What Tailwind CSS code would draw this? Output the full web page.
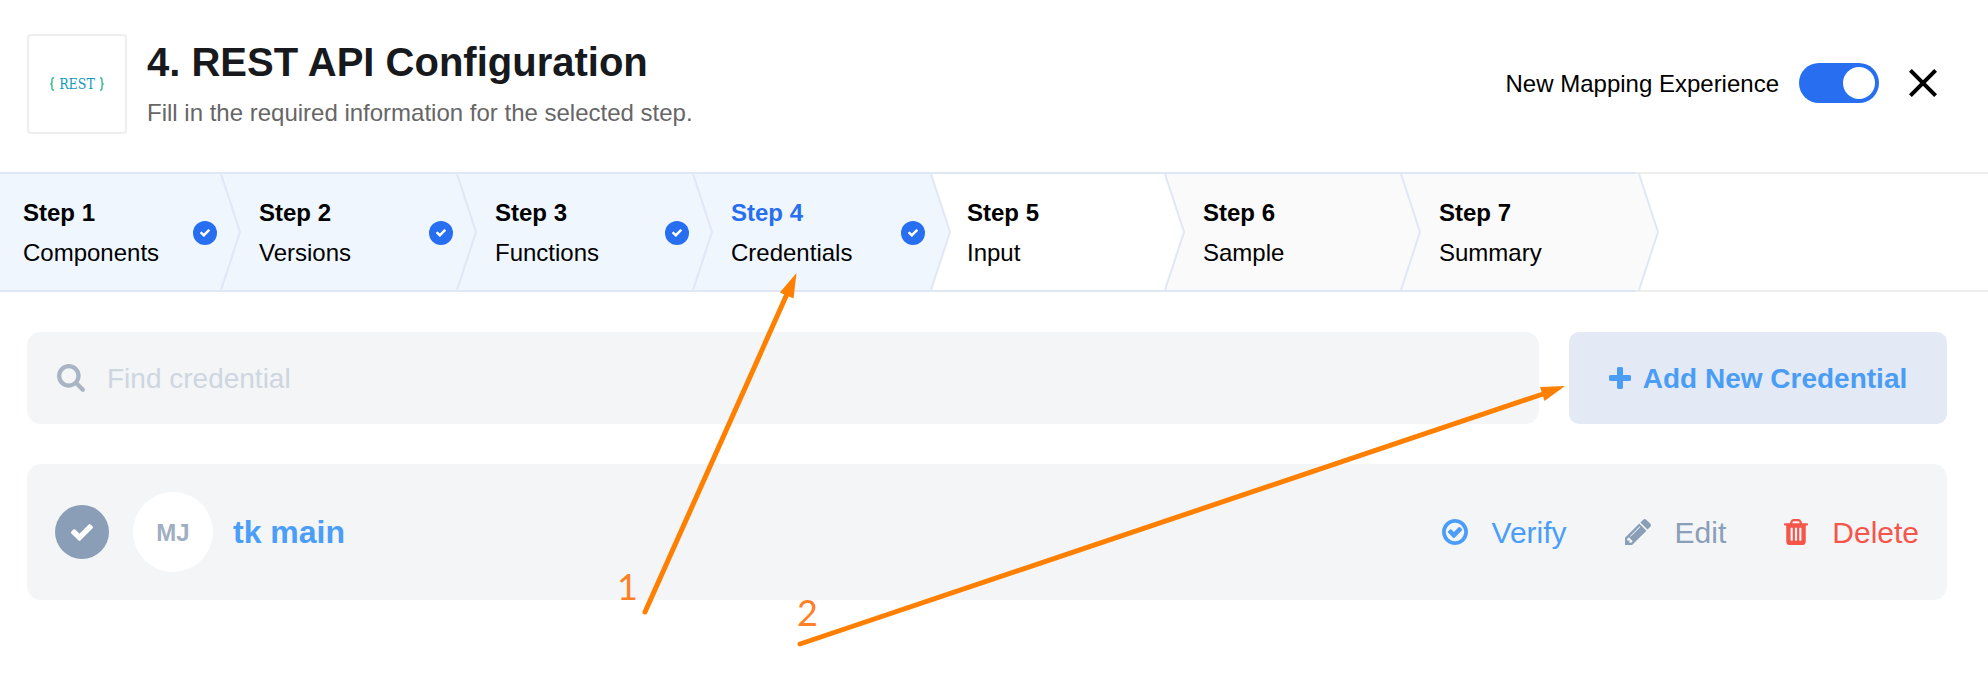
<!DOCTYPE html>
<html lang="en">
<head>
<meta charset="utf-8">
<meta name="viewport" content="width=device-width, initial-scale=1">
<title>REST API Configuration</title>
<script src="https://cdn.jsdelivr.net/npm/@tailwindcss/browser@4"></script>
</head>
<body class="relative min-h-screen overflow-x-hidden bg-white font-['Liberation_Sans',Arial,sans-serif] text-2xl text-black">

<svg class="hidden" aria-hidden="true">
  <symbol id="check" viewBox="121 334 1550 1188"><path d="M1671 566q0 40-28 68l-724 724-136 136q-28 28-68 28t-68-28l-136-136-362-362q-28-28-28-68t28-68l136-136q28-28 68-28t68 28l294 295 656-657q28-28 68-28t68 28l136 136q28 28 28 68z"/></symbol>
  <symbol id="chevron" viewBox="0 0 260 116" overflow="visible">
    <path d="M0 0H237L256 58L237 116H0Z"/>
    <path d="M237 0L256 58L237 116" fill="none" stroke="#e0e7f7" stroke-width="2"/>
  </symbol>
</svg>

<header class="flex h-[172px] items-start pt-[34px] pr-[51px] pl-[27px]">
  <div class="flex size-[100px] shrink-0 items-center justify-center gap-[5px] rounded border-2 border-[#eeeeee] font-['DejaVu_Serif_Condensed','DejaVu_Serif',serif] text-sm text-[#1199be]">
    <svg class="h-[14px] w-1" viewBox="0 0 4 14" fill="none" stroke="#3cc08e" stroke-width="1.500"><path d="M4 .7Q2 .7 2 2.500V5Q2 7 .3 7Q2 7 2 9V11.500Q2 13.300 4 13.300"/></svg>
    <span>REST</span>
    <svg class="h-[14px] w-1" viewBox="0 0 4 14" fill="none" stroke="#3cc08e" stroke-width="1.500"><path d="M0 .7Q2 .7 2 2.500V5Q2 7 3.700 7Q2 7 2 9V11.500Q2 13.300 0 13.300"/></svg>
  </div>
  <div class="ml-5 flex-1">
    <h1 class="mt-1 text-[40px] leading-[48px] font-bold text-[#17191c]">4. REST API Configuration</h1>
    <p class="mt-[11px] leading-8 text-[#666666]">Fill in the required information for the selected step.</p>
  </div>
  <div class="mt-7 flex items-center">
    <label for="mapping" class="pt-[2px] leading-10">New Mapping Experience</label>
    <input id="mapping" type="checkbox" role="switch" checked class="ml-5 h-10 w-20 appearance-none rounded-full bg-[#d0d5dd] p-1 before:block before:size-8 before:rounded-full before:bg-white checked:bg-[#286ef1] checked:before:ml-10">
    <button type="button" aria-label="Close" class="ml-[30px]">
      <svg class="size-7" viewBox="0 0 28 28" stroke="#000" stroke-width="4"><path d="M1.400 1.400L26.600 26.600M26.600 1.400L1.400 26.600"/></svg>
    </button>
  </div>
</header>

<nav class="flex" aria-label="Steps">
  <ol class="relative z-10 flex h-[120px] w-[1636px] shrink-0 border-y-2 border-[#dfe6f6]">
    <li class="relative z-[7] w-[236px] shrink-0">
      <svg class="absolute top-0 -left-4 h-[116px] w-[260px] fill-[#eff6fe]"><use href="#chevron"/></svg>
      <a href="#step1" class="relative flex h-full items-center pt-[2px] pr-[19px] pl-[23px]">
        <span class="flex-1 leading-10"><b class="block">Step 1</b>Components</span>
        <span class="flex size-6 items-center justify-center rounded-full bg-[#286ef1]"><svg class="h-2 w-[10px] fill-white"><use href="#check"/></svg></span>
      </a>
    </li>
    <li class="relative z-[6] w-[236px] shrink-0">
      <svg class="absolute top-0 -left-4 h-[116px] w-[260px] fill-[#eff6fe]"><use href="#chevron"/></svg>
      <a href="#step2" class="relative flex h-full items-center pt-[2px] pr-[19px] pl-[23px]">
        <span class="flex-1 leading-10"><b class="block">Step 2</b>Versions</span>
        <span class="flex size-6 items-center justify-center rounded-full bg-[#286ef1]"><svg class="h-2 w-[10px] fill-white"><use href="#check"/></svg></span>
      </a>
    </li>
    <li class="relative z-[5] w-[236px] shrink-0">
      <svg class="absolute top-0 -left-4 h-[116px] w-[260px] fill-[#eff6fe]"><use href="#chevron"/></svg>
      <a href="#step3" class="relative flex h-full items-center pt-[2px] pr-[19px] pl-[23px]">
        <span class="flex-1 leading-10"><b class="block">Step 3</b>Functions</span>
        <span class="flex size-6 items-center justify-center rounded-full bg-[#286ef1]"><svg class="h-2 w-[10px] fill-white"><use href="#check"/></svg></span>
      </a>
    </li>
    <li class="relative z-[4] w-[236px] shrink-0">
      <svg class="absolute top-0 -left-[14px] h-[116px] w-[260px] fill-[#eff6fe]"><use href="#chevron"/></svg>
      <a href="#step4" aria-current="step" class="relative flex h-full items-center pt-[2px] pr-[19px] pl-[23px]">
        <span class="flex-1 leading-10"><b class="block text-[#286ef1]">Step 4</b>Credentials</span>
        <span class="flex size-6 items-center justify-center rounded-full bg-[#286ef1]"><svg class="h-2 w-[10px] fill-white"><use href="#check"/></svg></span>
      </a>
    </li>
    <li class="relative z-[3] w-[236px] shrink-0">
      <svg class="absolute top-0 -left-4 h-[116px] w-[260px] fill-white"><use href="#chevron"/></svg>
      <a href="#step5" class="relative flex h-full items-center pt-[2px] pr-[19px] pl-[23px]">
        <span class="flex-1 leading-10"><b class="block">Step 5</b>Input</span>
      </a>
    </li>
    <li class="relative z-[2] w-[236px] shrink-0">
      <svg class="absolute top-0 -left-4 h-[116px] w-[260px] fill-[#fafafa]"><use href="#chevron"/></svg>
      <a href="#step6" class="relative flex h-full items-center pt-[2px] pr-[19px] pl-[23px]">
        <span class="flex-1 leading-10"><b class="block">Step 6</b>Sample</span>
      </a>
    </li>
    <li class="relative z-[1] w-[236px] shrink-0">
      <svg class="absolute top-0 -left-[14px] h-[116px] w-[260px] fill-[#fafafa]"><use href="#chevron"/></svg>
      <a href="#step7" class="relative flex h-full items-center pt-[2px] pr-[19px] pl-[23px]">
        <span class="flex-1 leading-10"><b class="block">Step 7</b>Summary</span>
      </a>
    </li>
  </ol>
  <div class="flex-1 border-y-2 border-[#eeeeee]"></div>
</nav>

<main class="pt-10 pr-[41px] pl-[27px]">
  <div class="flex gap-[30px] text-[28px]">
    <label class="flex h-[92px] flex-1 items-center gap-[22px] rounded-[14px] bg-[#f3f5f7] px-[30px]">
      <svg class="size-7 shrink-0 fill-[#a9b4c4]" viewBox="64 128 1664 1664" role="img" aria-label="Find credential"><path d="M1216 832q0-185-131.500-316.500t-316.500-131.500-316.500 131.500-131.500 316.500 131.500 316.500 316.500 131.500 316.500-131.500 131.500-316.500zm512 832q0 52-38 90t-90 38q-54 0-90-38l-343-342q-179 124-399 124-143 0-273.500-55.500t-225-150-150-225-55.500-273.500 55.500-273.500 150-225 225-150 273.500-55.500 273.500 55.500 225 150 150 225 55.500 273.500q0 220-124 399l343 343q37 37 37 90z"/></svg>
      <input type="search" placeholder="Find credential" class="min-w-0 flex-1 bg-transparent pt-[2px] leading-10 outline-none placeholder:text-[#ced6e0]">
    </label>
    <button type="button" class="flex h-[92px] w-[378px] items-center justify-center gap-3 rounded-[10px] bg-[#e3eaf6] font-bold text-[#4a9df5]">
      <svg class="size-[22px] fill-current" viewBox="192 128 1408 1408"><path d="M1600 736v192q0 40-28 68t-68 28h-416v416q0 40-28 68t-68 28h-192q-40 0-68-28t-28-68v-416h-416q-40 0-68-28t-28-68v-192q0-40 28-68t68-28h416v-416q0-40 28-68t68-28h192q40 0 68 28t28 68v416h416q40 0 68 28t28 68z"/></svg>
      <span class="pt-[2px]">Add New Credential</span>
    </button>
  </div>

  <section class="mt-10 flex h-[136px] items-center rounded-[14px] bg-[#f3f5f7] px-7">
    <button type="button" aria-label="Select tk main" aria-pressed="true" class="flex size-[54px] items-center justify-center rounded-full bg-[#8b9eb7]"><svg class="h-[17px] w-[22px] fill-white"><use href="#check"/></svg></button>
    <span class="ml-6 flex size-20 items-center justify-center rounded-full bg-white pt-[2px] font-bold text-[#a0aec3]">MJ</span>
    <h2 class="ml-5 flex-1 text-[32px] font-bold text-[#4a9df8]">tk main</h2>
    <div class="flex items-center gap-[58px] text-[30px] leading-10">
      <button type="button" class="flex items-center gap-6 text-[#4a9df8]">
        <svg class="size-[26px] fill-current" viewBox="128 128 1536 1536"><path d="M1299 813l-422 422q-19 19-45 19t-45-19l-294-294q-19-19-19-45t19-45l102-102q19-19 45-19t45 19l147 147 275-275q19-19 45-19t45 19l102 102q19 19 19 45t-19 45zm141 83q0-148-73-273t-198-198-273-73-273 73-198 198-73 273 73 273 198 198 273 73 273-73 198-198 73-273zm224 0q0 209-103 385.500t-279.500 279.500-385.500 103-385.500-103-279.500-279.500-103-385.500 103-385.500 279.500-279.500 385.500-103 385.500 103 279.500 279.500 103 385.500z"/></svg>
        <span class="pt-[2px]">Verify</span>
      </button>
      <button type="button" class="flex items-center gap-6 text-[#8b9eb7]">
        <svg class="size-[26px] fill-current" viewBox="128 149 1515 1515"><path d="M491 1536l91-91-235-235-91 91v107h128v128h107zm523-928q0-22-22-22-10 0-17 7l-542 542q-7 7-7 17 0 22 22 22 10 0 17-7l542-542q7-7 7-17zm-54-192l416 416-832 832h-416v-416zm683 96q0 53-37 90l-166 166-416-416 166-165q36-38 90-38 53 0 91 38l235 234q37 39 37 91z"/></svg>
        <span class="pt-[2px]">Edit</span>
      </button>
      <button type="button" class="flex items-center gap-6 text-[#f6554b]">
        <svg class="h-[26px] w-6 fill-current" viewBox="192 128 1408 1536"><path d="M704 1376v-704q0-14-9-23t-23-9h-64q-14 0-23 9t-9 23v704q0 14 9 23t23 9h64q14 0 23-9t9-23zm256 0v-704q0-14-9-23t-23-9h-64q-14 0-23 9t-9 23v704q0 14 9 23t23 9h64q14 0 23-9t9-23zm256 0v-704q0-14-9-23t-23-9h-64q-14 0-23 9t-9 23v704q0 14 9 23t23 9h64q14 0 23-9t9-23zm-544-992h448l-48-117q-7-9-17-11h-317q-10 2-17 11zm928 32v64q0 14-9 23t-23 9h-96v948q0 83-47 143.500t-113 60.500h-832q-66 0-113-58.500t-47-141.500v-952h-96q-14 0-23-9t-9-23v-64q0-14 9-23t23-9h309l70-167q15-37 54-63t79-26h320q40 0 79 26t54 63l70 167h309q14 0 23 9t9 23z"/></svg>
        <span class="pt-[2px]">Delete</span>
      </button>
    </div>
  </section>
</main>

<!-- Annotation arrows over the page -->
<svg class="pointer-events-none absolute top-0 left-0 z-20 h-[678px] w-[1988px] font-[Lato,sans-serif] text-4xl" viewBox="0 0 1988 678">
  <g fill="none" stroke="#ff8000" stroke-width="5" stroke-linecap="round">
    <path d="M645 612L787 294"/>
    <path d="M800 644L1543 394"/>
  </g>
  <g fill="#ff8000">
    <path d="M796.500 273L779.800 292.500L793.500 298.500Z"/>
    <path d="M1565 386L1540 387L1544.500 401Z"/>
  </g>
  <g fill="#ff7f27">
    <text x="617" y="600">1</text>
    <text x="797" y="626">2</text>
  </g>
</svg>
</body>
</html>
